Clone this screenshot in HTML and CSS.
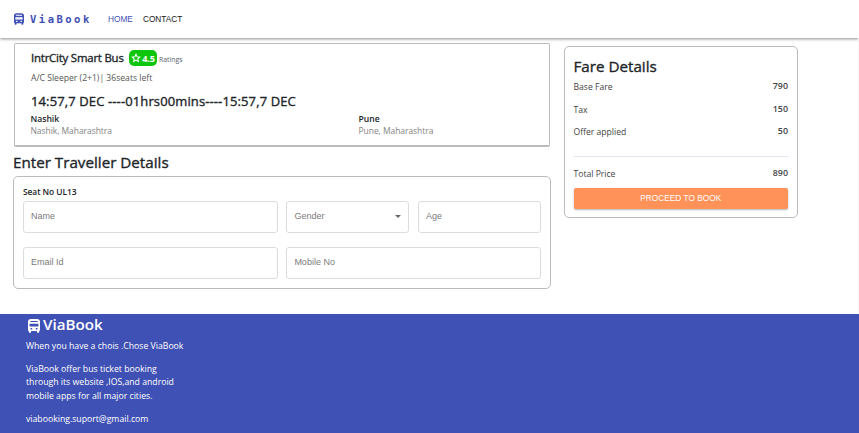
FILE: index.html
```html
<!DOCTYPE html>
<html lang="en">
<head>
<meta charset="utf-8">
<title>ViaBook</title>
<link rel="stylesheet" href="styles.css">
</head>
<body>
<svg class="defs" width="0" height="0"><symbol id="bus" viewBox="0 0 12 14"><path fill="currentColor" fill-rule="evenodd" d="M3 0h6q3 0 3 3v8q0 .7-.8.900V13q0 .8-.8.8h-.7q-.8 0-.8-.8v-1H3.100v1q0 .8-.8.8h-.7q-.8 0-.8-.8v-1.100Q0 11.700 0 11V3q0-3 3-3ZM2.300 2v1h7.400V2ZM1.600 4.800v2.700h8.800V4.800ZM2.500 9v1.500h1.700V9ZM7.800 9v1.500h1.700V9Z"/></symbol></svg>
<header class="navbar">
  <svg class="brand-icon"><use href="#bus"/></svg>
  <span class="brand">ViaBook</span>
  <nav><a class="active">HOME</a><a class="contact">CONTACT</a></nav>
</header>
<main class="content">
  <section class="booking">
    <article class="trip">
      <div class="trip-head">
        <h2>IntrCity Smart Bus</h2>
        <span class="rating"><svg viewBox="0 0 24 24"><path fill="none" stroke="currentColor" stroke-width="2.500" d="m12 3 2.700 6 6.500.7-4.900 4.400 1.400 6.400-5.700-3.300-5.700 3.300 1.400-6.400L2.800 9.700 9.300 9Z"/></svg><b>4.5</b></span>
        <span class="ratings">Ratings</span>
      </div>
      <p class="coach">A/C Sleeper (2+1)| 36seats left</p>
      <h3 class="times">14:57,7 DEC ----01hrs00mins----15:57,7 DEC</h3>
      <div class="stops">
        <div><b>Nashik</b><span>Nashik, Maharashtra</span></div>
        <div><b>Pune</b><span>Pune, Maharashtra</span></div>
      </div>
    </article>
    <h1 class="section-title">Enter Traveller Details</h1>
    <form class="traveller">
      <h4>Seat No UL13</h4>
      <div class="fields">
        <div class="field wide">Name</div>
        <div class="field select">Gender<i></i></div>
        <div class="field">Age</div>
        <div class="field wide">Email Id</div>
        <div class="field wide">Mobile No</div>
      </div>
    </form>
  </section>
  <aside class="fare">
    <h2>Fare Details</h2>
    <div class="line"><span>Base Fare</span><b>790</b></div>
    <div class="line"><span>Tax</span><b>150</b></div>
    <div class="line"><span>Offer applied</span><b>50</b></div>
    <hr>
    <div class="line"><span>Total Price</span><b>890</b></div>
    <button type="button">PROCEED TO BOOK</button>
  </aside>
</main>
<footer class="footer">
  <div class="footer-brand"><svg><use href="#bus"/></svg><span>ViaBook</span></div>
  <p class="slogan">When you have a chois .Chose ViaBook</p>
  <p class="about">ViaBook offer bus ticket booking<br>through its website ,IOS,and android<br>mobile apps for all major cities.</p>
  <p class="mail">viabooking.suport@gmail.com</p>
</footer>
</body>
</html>
```
FILE: styles.css
```css
* { box-sizing: border-box; }
body { margin: 0; height: 433px; display: flex; flex-direction: column; overflow: hidden; background: #fff; color: #212529; font-family: "Open Sans", "Noto Sans", sans-serif; font-size: 8.600px; }
h1, h2, h3, h4, p { margin: 0; font-weight: 400; }
h1, h2, h3 { -webkit-text-stroke: .35px currentColor; }
b, h4 { font-weight: 600; }
.defs { position: absolute; }

.navbar { height: 38px; flex: none; display: flex; align-items: center; padding-left: 14px; background: #fff; box-shadow: 0 1px 3px rgba(0,0,0,.45); }
.brand-icon { width: 10px; height: 12px; color: #3f51b5; }
.brand { margin-left: 6px; width: 78px; color: #3f51b5; font: bold 10.500px/14px "DejaVu Sans Mono", monospace; letter-spacing: 2.500px; }
nav { display: flex; gap: 10px; font: 8.300px/14px "Liberation Sans", Arial, sans-serif; }
.active { color: #3f51b5; }
.contact { color: #212121; }

.content { height: 276px; flex: none; display: flex; align-items: flex-start; padding: 5px 0 0 13px; box-shadow: inset -1px 0 #f6f6f6; }
.booking { width: 538px; }
.trip { height: 104px; margin: 0 1px; padding: 6px 0 0 16px; border: 1px solid #bbb; border-bottom: 2px solid #bbb; border-radius: 2px; }
.trip-head { display: flex; align-items: center; height: 16px; }
.trip-head h2 { width: 98px; font-size: 11.400px; line-height: 14px; letter-spacing: -.2px; white-space: nowrap; padding-bottom: 1px; }
.rating { display: flex; align-items: center; justify-content: center; width: 28px; height: 16px; border-radius: 5px; background: #0fc60f; color: #fff; font-size: 9.200px; }
.rating b { font-weight: 700; letter-spacing: -.2px; }
.rating svg { width: 10px; height: 10px; margin-right: 1px; }
.ratings { margin: 2px 0 0 2px; color: #59616a; font-size: 6.900px; }
.coach { height: 12px; margin-top: 6px; color: #555; line-height: 12px; }
.times { height: 18px; margin-top: 8px; font-size: 13px; letter-spacing: .12px; line-height: 18px; white-space: nowrap; }
.stops { display: grid; grid-template-columns: 328px 1fr; margin-top: 4px; line-height: 11px; margin-left: -.5px; }
.stops b, .stops span { display: block; }
.stops span { color: #858585; font-size: 8.500px; letter-spacing: -.05px; }

.section-title { height: 29px; font-size: 15.200px; line-height: 30px; }
.traveller { height: 113px; padding: 9px 9px 0; border: 1px solid #bbb; border-radius: 5px; }
.traveller h4 { height: 15px; font-size: 8.400px; letter-spacing: -.05px; line-height: 11px; }
.fields { display: grid; grid-template-columns: 123px 123px 123px 123px; gap: 14px 8.700px; }
.field { height: 32px; display: flex; align-items: center; justify-content: space-between; padding: 0 7px 2px; border: 1px solid #dcdcdc; border-radius: 3px; color: #7b7b7b; font: 9px/14px "Liberation Sans", Arial, sans-serif; }
.wide { grid-column: span 2; }
.select i { border: 3px solid transparent; border-top-color: #666; border-bottom: 0; }

.fare { width: 234px; height: 172px; margin: 3px 0 0 13px; padding: 9px 9px 0 8.500px; border: 1px solid #bbb; border-radius: 5px; }
.fare h2 { height: 20px; font-size: 15.200px; line-height: 20px; }
.line { display: flex; justify-content: space-between; height: 22.700px; color: #444; line-height: 22px; }
.line b { font-size: 8.900px; line-height: 19px; }
.fare hr { height: 1px; margin: 12px 0 6px; border: 0; background: #e5e5f5; }
.fare button { display: block; width: 100%; height: 21px; margin-top: 2px; padding: 0; border: 0; border-radius: 2px; background: #ff9259; color: #fff; box-shadow: 0 1px 2px rgba(0,0,0,.3); font: 8.300px/21px "Liberation Sans", Arial, sans-serif; }

.footer { flex: 1; padding: 0 26px; background: #3f51b5; color: #fff; }
.footer-brand { display: flex; align-items: center; height: 22px; font-size: 15.200px; font-weight: 600; line-height: 20px; }
.footer-brand span { padding-bottom: 2px; }
.footer-brand svg { width: 12px; height: 14px; margin: 2px 3px 0 2px; }
.footer p { font-size: 8.700px; line-height: 13.700px; }
.footer .slogan { margin-top: 4px; }
.footer .about, .footer .mail { margin-top: 9px; }
```
